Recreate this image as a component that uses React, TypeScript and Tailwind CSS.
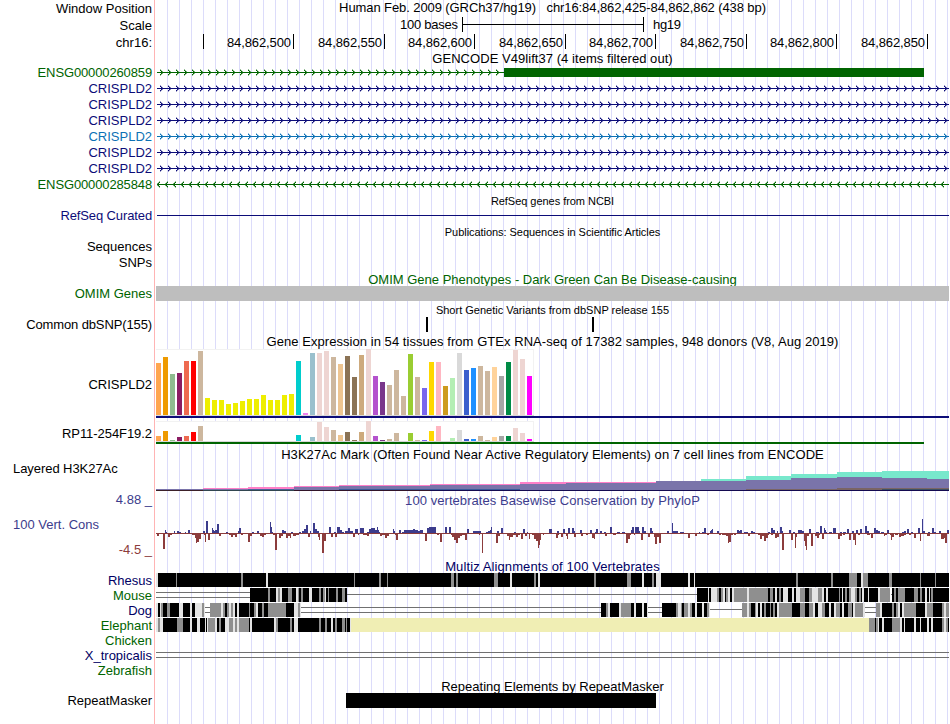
import type { ReactNode } from 'react';

type Bar = [x: number, w: number, h: number];
type Seg = [x: number, w: number, shade: string];

const GREEN = '#006400';
const NAVY = '#0c0c78';
const BLUE = '#0c71b5';

const SHADES: Record<string, string> = { k: '#000000', g: '#8f8f8f', l: '#e4e4e4', w: '#ffffff', y: '#f0eeb4' };

const genes = [
    { name: 'CRISPLD2', color: NAVY, text: 'text-[#0c0c78]' },
    { name: 'CRISPLD2', color: NAVY, text: 'text-[#0c0c78]' },
    { name: 'CRISPLD2', color: NAVY, text: 'text-[#0c0c78]' },
    { name: 'CRISPLD2', color: BLUE, text: 'text-[#0c71b5]' },
    { name: 'CRISPLD2', color: NAVY, text: 'text-[#0c0c78]' },
    { name: 'CRISPLD2', color: NAVY, text: 'text-[#0c0c78]' },
];

const axisTicks: [number, string][] = [
    [203, ''], [293, '84,862,500'], [384, '84,862,550'], [474, '84,862,600'], [565, '84,862,650'],
    [655, '84,862,700'], [746, '84,862,750'], [836, '84,862,800'], [927, '84,862,850'],
];

const tissueColors = [
    '#ffa54f', '#ee9a00', '#8fbc8f', '#8b1c62', '#ee6a50', '#ff0000', '#cdb79e',
    '#eeee00', '#eeee00', '#eeee00', '#eeee00', '#eeee00', '#eeee00', '#eeee00', '#eeee00', '#eeee00', '#eeee00', '#eeee00', '#eeee00', '#eeee00',
    '#00cdcd', '#ee82ee', '#9ac0cd', '#eed5d2', '#eed5d2', '#cdb79e', '#eec591', '#8b7355', '#8b7355', '#cdaa7d', '#eed5d2',
    '#b452cd', '#7a378b', '#cdb79e', '#cdb79e', '#cdb79e', '#9acd32', '#cdb79e', '#7a67ee', '#ffd700', '#ffb6c1',
    '#cd9b1d', '#b4eeb4', '#d9d9d9', '#3a5fcd', '#1e90ff', '#cdb79e', '#cdb79e', '#ffd39b', '#a6a6a6', '#008b45', '#eed5d2', '#eed5d2', '#ff00ff',
];

const crispld2 = [
    52, 58, 41, 42, 54, 54, 64, 17, 15, 15, 11, 12, 14, 16, 16, 20, 15, 15, 20, 21, 54, 2, 62, 62, 64, 58, 51, 59, 38, 60, 66,
    39, 33, 30, 45, 19, 61, 38, 27, 53, 53, 29, 37, 62, 45, 47, 49, 44, 48, 39, 53, 65, 56, 39,
];

const rp11 = [
    5, 10, 1, 4, 5, 9, 15, 0, 0, 0, 0, 0, 0, 0, 0, 0, 0, 0, 0, 0, 6, 0, 4, 19, 14, 11, 6, 9, 1, 9, 20,
    5, 1, 2, 8, 0, 8, 1, 1, 10, 15, 0, 3, 11, 2, 2, 5, 1, 4, 5, 5, 13, 8, 2,
];

// x, width, y of the top edge, fill
const h3k27ac: [number, number, number, string][] = [
    [203, 91, 488, '#ff80c8'], [248, 46, 487, '#ff80c8'], [294, 45, 486, '#ff80c8'], [339, 91, 485, '#ff80c8'],
    [430, 90, 484, '#ff80c8'], [520, 136, 482, '#ff80c8'],
    [701, 45, 479, '#78e8cc'], [746, 45, 476, '#78e8cc'], [791, 46, 474, '#78e8cc'], [837, 45, 472, '#78e8cc'], [882, 67, 471, '#78e8cc'],
    [156, 138, 489, '#7a74aa'], [294, 45, 487, '#7a74aa'], [339, 91, 486, '#7a74aa'], [430, 90, 485, '#7a74aa'],
    [520, 46, 484, '#7a74aa'], [566, 90, 483, '#7a74aa'], [656, 90, 481, '#7a74aa'], [746, 45, 480, '#7a74aa'],
    [791, 46, 478, '#7a74aa'], [837, 45, 477, '#7a74aa'], [882, 45, 478, '#7a74aa'], [927, 22, 479, '#7a74aa'],
    [248, 46, 489, '#46649a'], [339, 181, 489, '#3c5a9a'], [746, 91, 489, '#7a6464'], [837, 112, 488, '#7a6464'], [882, 67, 489, '#3c5064'],
    [156, 47, 490, '#3c2028'], [203, 91, 490, '#324650'], [294, 136, 490, '#321428'], [430, 519, 490, '#140a50'],
];

const conserved: Bar[] = [
    [165, 1, 3], [166, 1, 1], [174, 1, 2], [177, 2, 2], [179, 2, 1], [185, 1, 1], [188, 2, 3], [203, 2, 2], [206, 2, 12], [212, 1, 5], [213, 1, 3], [214, 1, 2], [215, 2, 3], [217, 2, 9], [226, 2, 1],
    [238, 1, 2], [239, 2, 5], [252, 2, 1], [257, 2, 2], [270, 1, 11], [271, 1, 6], [272, 1, 1], [282, 2, 3], [284, 2, 2], [291, 2, 1], [299, 2, 1], [302, 2, 2], [304, 2, 4], [306, 2, 8],
    [310, 1, 2], [313, 2, 10], [315, 2, 4], [317, 2, 2], [329, 2, 6], [334, 2, 1], [337, 3, 6], [340, 2, 3], [342, 2, 1], [345, 3, 2], [348, 2, 5], [350, 3, 2], [355, 3, 4], [360, 4, 5],
    [367, 2, 1], [369, 2, 4], [371, 4, 5], [375, 2, 3], [377, 1, 6], [378, 1, 3], [379, 1, 1], [393, 1, 4], [394, 1, 2], [399, 2, 3], [402, 2, 1], [404, 9, 3], [413, 2, 4], [415, 3, 3], [418, 2, 2],
    [420, 3, 3], [427, 2, 5], [429, 4, 6], [433, 3, 6], [445, 2, 6], [449, 2, 6], [467, 2, 4], [473, 8, 2], [486, 2, 1], [488, 2, 2], [490, 1, 3], [491, 1, 6], [497, 2, 2], [501, 2, 5], [514, 2, 1],
    [523, 2, 4], [527, 1, 1], [549, 3, 4], [557, 2, 2], [563, 2, 4], [568, 2, 5], [572, 2, 5], [574, 1, 2], [580, 2, 3], [590, 2, 3], [595, 1, 1], [596, 2, 4], [600, 2, 2], [604, 2, 1], [610, 2, 6],
    [617, 3, 1], [622, 3, 1], [631, 1, 3], [632, 2, 6], [635, 4, 6], [639, 1, 2], [642, 2, 6], [644, 2, 2], [650, 2, 5], [652, 1, 2], [667, 2, 2], [672, 1, 10], [673, 1, 2], [674, 4, 2], [680, 4, 1],
    [699, 1, 1], [702, 2, 1], [704, 2, 5], [710, 1, 2], [711, 1, 3], [712, 1, 4], [717, 2, 2], [737, 2, 3], [739, 1, 2], [740, 2, 3], [744, 4, 1], [751, 2, 2], [753, 2, 1], [768, 2, 1], [771, 2, 5],
    [773, 2, 3], [777, 1, 2], [780, 2, 6], [782, 1, 2], [789, 2, 3], [793, 2, 1], [798, 4, 3], [802, 2, 2], [809, 2, 4], [816, 3, 1], [820, 2, 7], [824, 1, 5], [825, 1, 3], [826, 1, 1], [829, 3, 1],
    [833, 3, 5], [840, 2, 1], [843, 3, 1], [847, 2, 4], [852, 2, 2], [856, 2, 3], [860, 2, 4], [865, 2, 7], [867, 2, 2], [874, 2, 5], [876, 2, 3], [878, 2, 2], [881, 3, 1], [887, 2, 3], [902, 2, 1],
    [904, 2, 2], [907, 2, 4], [911, 2, 1], [918, 2, 5], [922, 1, 14], [923, 2, 2], [928, 2, 1], [932, 2, 5], [934, 2, 1], [939, 2, 2], [947, 2, 3],
];

const accelerated: Bar[] = [
    [157, 2, 3], [159, 4, 1], [163, 2, 16], [165, 3, 1], [168, 2, 4], [170, 2, 2], [172, 2, 1], [175, 1, 1], [182, 2, 1], [192, 3, 2], [195, 1, 5], [196, 1, 10], [197, 2, 9], [199, 2, 6], [201, 1, 1],
    [204, 1, 2], [205, 1, 9], [208, 2, 7], [210, 2, 1], [219, 2, 3], [221, 4, 1], [229, 2, 2], [231, 2, 4], [233, 2, 2], [235, 2, 4], [241, 2, 2], [243, 5, 1], [248, 2, 9], [250, 2, 3], [254, 5, 1],
    [260, 2, 3], [262, 2, 4], [264, 2, 2], [266, 3, 1], [273, 2, 2], [275, 2, 17], [279, 2, 5], [281, 2, 3], [283, 3, 1], [286, 2, 5], [288, 2, 3], [290, 1, 5], [293, 3, 3], [296, 3, 2], [308, 2, 4],
    [318, 1, 4], [319, 1, 7], [322, 2, 20], [324, 2, 8], [326, 2, 1], [331, 2, 4], [335, 2, 4], [342, 3, 1], [353, 2, 4], [358, 1, 2], [363, 4, 2], [367, 2, 3], [374, 2, 1], [380, 2, 3], [382, 3, 2],
    [385, 2, 5], [387, 2, 3], [389, 3, 1], [395, 1, 2], [396, 2, 7], [400, 2, 1], [423, 2, 1], [425, 2, 8], [437, 2, 2], [440, 2, 9], [442, 2, 1], [451, 1, 2], [452, 2, 4], [454, 2, 7], [456, 2, 10],
    [458, 2, 5], [460, 2, 3], [462, 3, 2], [465, 2, 7], [469, 2, 1], [479, 1, 2], [482, 1, 20], [484, 2, 1], [492, 4, 1], [496, 2, 10], [498, 2, 3], [500, 1, 1], [504, 2, 1], [507, 2, 3], [509, 1, 7],
    [510, 1, 4], [511, 2, 4], [513, 3, 2], [516, 2, 4], [518, 2, 2], [521, 2, 6], [525, 2, 3], [528, 1, 1], [529, 1, 6], [532, 2, 2], [534, 2, 6], [536, 2, 8], [538, 1, 15], [539, 1, 12], [540, 1, 7],
    [543, 1, 2], [548, 3, 1], [552, 2, 1], [556, 2, 5], [558, 1, 2], [561, 2, 4], [566, 1, 3], [567, 1, 6], [574, 2, 4], [576, 1, 1], [581, 2, 3], [584, 2, 1], [586, 2, 2], [592, 2, 5], [594, 1, 6],
    [605, 2, 3], [613, 3, 2], [623, 3, 1], [626, 2, 10], [628, 2, 6], [630, 1, 2], [634, 1, 2], [641, 2, 7], [645, 2, 1], [648, 2, 4], [654, 1, 4], [655, 2, 11], [657, 2, 4], [659, 2, 10], [661, 2, 1],
    [676, 2, 1], [683, 2, 1], [688, 2, 5], [695, 2, 3], [707, 2, 2], [715, 1, 1], [719, 2, 2], [722, 4, 2], [726, 2, 3], [728, 1, 10], [729, 2, 9], [731, 2, 2], [734, 2, 2], [748, 2, 3], [756, 2, 1],
    [758, 2, 2], [760, 2, 6], [762, 2, 3], [764, 2, 8], [766, 2, 5], [768, 1, 2], [771, 2, 2], [775, 2, 5], [777, 2, 4], [782, 2, 17], [787, 1, 1], [791, 2, 7], [795, 1, 15], [796, 1, 4], [804, 1, 8],
    [805, 1, 13], [806, 1, 17], [807, 2, 3], [811, 2, 13], [813, 2, 1], [815, 2, 3], [817, 2, 5], [819, 1, 2], [822, 2, 6], [828, 2, 1], [835, 2, 1], [838, 2, 6], [840, 2, 3], [843, 2, 2], [849, 2, 7],
    [853, 2, 7], [855, 1, 12], [858, 2, 2], [862, 2, 1], [867, 3, 2], [871, 2, 5], [880, 2, 1], [884, 1, 3], [885, 2, 2], [890, 1, 2], [891, 1, 7], [892, 2, 4], [895, 3, 2], [899, 2, 4], [901, 3, 3],
    [904, 2, 2], [909, 2, 2], [914, 2, 5], [920, 1, 8], [927, 3, 3], [941, 3, 6], [944, 1, 5], [945, 2, 10],
];

const rhesus: Seg[] = [
    [156, 2, 'l'], [158, 791, 'k'], [176, 1, 'g'], [241, 2, 'g'], [266, 2, 'l'], [354, 1, 'g'], [379, 2, 'g'], [387, 1, 'g'], [451, 3, 'g'], [456, 2, 'g'], [494, 4, 'g'], [510, 2, 'l'],
    [534, 2, 'g'], [538, 2, 'l'], [594, 2, 'g'], [627, 4, 'g'], [642, 2, 'l'], [652, 2, 'g'], [656, 5, 'l'], [688, 2, 'l'], [694, 1, 'l'], [796, 2, 'g'], [831, 2, 'g'], [849, 8, 'g'],
    [861, 2, 'l'], [863, 5, 'g'], [889, 3, 'g'], [920, 1, 'g'], [935, 1, 'g'],
];

const mouse: Seg[] = [
    [250, 97, 'k'], [268, 2, 'g'], [276, 2, 'l'], [278, 2, 'g'], [280, 2, 'l'], [288, 4, 'g'], [296, 2, 'l'], [298, 1, 'g'], [301, 2, 'g'], [309, 3, 'l'], [319, 2, 'g'], [323, 2, 'g'],
    [325, 1, 'l'], [328, 1, 'g'], [336, 2, 'g'], [342, 3, 'g'], [697, 252, 'k'], [708, 1, 'l'], [711, 6, 'l'], [717, 2, 'g'], [721, 2, 'g'], [723, 2, 'l'], [726, 2, 'g'], [728, 2, 'l'],
    [732, 2, 'l'], [734, 34, 'g'], [747, 2, 'l'], [770, 3, 'g'], [775, 2, 'l'], [779, 2, 'g'], [783, 5, 'l'], [792, 2, 'l'], [796, 4, 'l'], [800, 5, 'g'], [809, 3, 'g'], [812, 2, 'l'],
    [814, 4, 'l'], [818, 4, 'g'], [822, 2, 'l'], [826, 2, 'l'], [839, 1, 'g'], [842, 1, 'l'], [845, 2, 'g'], [849, 2, 'g'], [851, 4, 'l'], [855, 2, 'g'], [859, 2, 'g'], [862, 2, 'l'],
    [868, 1, 'l'], [878, 2, 'l'], [880, 10, 'g'], [890, 2, 'w'], [894, 4, 'g'], [898, 7, 'g'], [896, 2, 'k'], [914, 4, 'g'], [920, 2, 'g'], [925, 2, 'l'], [929, 1, 'l'], [931, 2, 'g'],
];

const dog: Seg[] = [
    [156, 49, 'k'], [156, 2, 'l'], [160, 1, 'l'], [161, 2, 'g'], [167, 3, 'g'], [179, 4, 'l'], [190, 2, 'l'], [195, 7, 'l'], [202, 2, 'g'], [204, 1, 'l'],
    [210, 90, 'k'], [210, 11, 'g'], [221, 2, 'l'], [223, 2, 'g'], [227, 2, 'g'], [229, 2, 'l'], [231, 2, 'g'], [233, 2, 'l'], [237, 2, 'l'], [249, 1, 'g'], [254, 2, 'g'], [256, 2, 'l'],
    [262, 2, 'g'], [268, 18, 'g'], [294, 4, 'l'], [298, 2, 'g'], [300, 1, 'l'],
    [601, 46, 'k'], [606, 2, 'g'], [608, 2, 'l'], [619, 2, 'l'], [621, 10, 'g'], [634, 2, 'l'], [642, 2, 'l'], [647, 1, 'l'],
    [662, 48, 'k'], [676, 2, 'g'], [678, 3, 'l'], [681, 1, 'g'], [684, 4, 'g'], [688, 2, 'l'], [690, 2, 'g'], [695, 2, 'l'], [702, 2, 'l'], [707, 2, 'g'], [709, 1, 'l'],
    [742, 122, 'k'], [742, 5, 'g'], [747, 2, 'l'], [749, 2, 'g'], [755, 1, 'g'], [756, 2, 'l'], [760, 2, 'l'], [764, 2, 'g'], [770, 1, 'g'], [773, 2, 'g'], [777, 2, 'l'], [779, 9, 'g'],
    [788, 4, 'g'], [800, 5, 'g'], [809, 4, 'g'], [813, 2, 'l'], [818, 4, 'l'], [822, 3, 'g'], [829, 2, 'l'], [834, 2, 'l'], [836, 4, 'g'], [842, 2, 'l'], [848, 4, 'g'], [853, 2, 'l'],
    [855, 8, 'g'], [863, 2, 'l'],
    [876, 73, 'k'], [876, 4, 'g'], [880, 2, 'l'], [892, 2, 'g'], [896, 2, 'g'], [898, 2, 'l'], [904, 12, 'g'], [902, 2, 'l'], [925, 2, 'l'], [927, 6, 'g'], [942, 2, 'g'], [944, 2, 'l'], [946, 3, 'g'],
];

const elephant: Seg[] = [
    [156, 194, 'k'], [156, 2, 'l'], [158, 2, 'g'], [160, 3, 'l'], [177, 6, 'g'], [190, 2, 'l'], [197, 3, 'l'], [205, 1, 'l'], [207, 1, 'l'], [208, 7, 'g'], [215, 2, 'l'], [219, 2, 'g'],
    [225, 4, 'l'], [229, 4, 'g'], [233, 2, 'l'], [235, 2, 'g'], [237, 2, 'l'], [239, 10, 'g'], [250, 2, 'l'], [274, 2, 'l'], [276, 2, 'g'], [290, 2, 'g'], [294, 4, 'l'], [319, 2, 'g'],
    [325, 2, 'g'], [331, 2, 'l'], [335, 2, 'g'], [342, 3, 'g'], [346, 1, 'g'], [350, 1, 'l'], [351, 518, 'y'],
    [869, 80, 'k'], [869, 6, 'g'], [876, 2, 'g'], [878, 1, 'l'], [882, 2, 'l'], [892, 8, 'g'], [900, 2, 'l'], [904, 1, 'l'], [914, 2, 'l'], [920, 1, 'l'], [927, 2, 'l'], [931, 2, 'l'],
    [942, 2, 'g'], [944, 2, 'l'], [946, 2, 'g'],
];

type RowProps = { height: string; label?: ReactNode; children?: ReactNode };

// A label cell on the left, the pink divider, then the lane itself.
function Row({ height, label, children }: RowProps) {
    return (
        <div className={`flex ${height}`}>
            <div className="flex w-[155px] shrink-0 flex-col items-end justify-start border-r border-[#ffb4b4] pr-[2px]">{label}</div>
            {children}
        </div>
    );
}

function Label({ children, className = '' }: { children: ReactNode; className?: string }) {
    return <span className={`whitespace-pre leading-[16px] ${className}`}>{children}</span>;
}

function Title({ children, className = '' }: { children: ReactNode; className?: string }) {
    return <div className={`flex w-[795px] justify-center whitespace-pre leading-[16px] ${className}`}>{children}</div>;
}

// Lanes share the chart's own coordinates, so every lane starts at its top.
function Lane({ top, height, children }: { top: number; height: number; children?: ReactNode }) {
    return (
        <svg className="block shrink-0" width={795} height={height} viewBox={`155 ${top} 795 ${height}`} shapeRendering="crispEdges">
            {children}
        </svg>
    );
}

function Gene({ top, color, left = false, end = 949 }: { top: number; color: string; left?: boolean; end?: number }) {
    const y = top + 7;
    const d = left ? 1 : -1;
    const tips: number[] = [];
    for (let x = left ? 157 : 162; x < end; x += 8) tips.push(x);
    return (
        <>
            <rect x={157} y={y} width={end - 157} height={1} fill={color} />
            {tips.map((x) => (
                <g key={x} fill={color}>
                    <rect x={x} y={y - 1} width={1} height={3} opacity={0.5} />
                    <rect x={x + d} y={y - 1} width={1} height={3} />
                    <rect x={x + d} y={y - 2} width={1} height={5} opacity={0.4} />
                    <rect x={x + 2 * d} y={y - 2} width={1} height={1} />
                    <rect x={x + 2 * d} y={y + 2} width={1} height={1} />
                    <rect x={x + 2 * d} y={y - 3} width={1} height={1} opacity={0.4} />
                    <rect x={x + 2 * d} y={y + 3} width={1} height={1} opacity={0.4} />
                </g>
            ))}
        </>
    );
}

function Expression({ values, base, boxTop }: { values: number[]; base: number; boxTop: number }) {
    return (
        <>
            <rect x={156} y={boxTop} width={378} height={base - boxTop + 1} fill="#f2f2f2" />
            <rect x={156} y={boxTop + 1} width={377} height={base - boxTop - 1} fill="#ffffff" />
            <rect x={156} y={base} width={378} height={1} fill="#d8d8d8" />
            {values.map((v, i) => (
                <rect key={i} x={156 + i * 7} y={base - v} width={5} height={v} fill={tissueColors[i]} />
            ))}
        </>
    );
}

function Segments({ data, y }: { data: Seg[]; y: number }) {
    return (
        <>
            {data.map(([x, w, s], i) => (
                <rect key={i} x={x} y={y} width={w} height={14} fill={SHADES[s]} />
            ))}
        </>
    );
}

function DoubleLine({ x, to, y }: { x: number; to: number; y: number }) {
    return (
        <>
            <rect x={x} y={y} width={to - x} height={1} fill="#707070" />
            <rect x={x} y={y + 5} width={to - x} height={1} fill="#707070" />
        </>
    );
}

export default function App() {
    return (
        <div className="relative h-[724px] w-[950px] overflow-hidden bg-white font-['Liberation_Sans',Arial,sans-serif] text-[13px] text-black">
            <div className="absolute inset-y-0 left-[167px] w-[782px] bg-[repeating-linear-gradient(90deg,#dcdcfa_0_1px,transparent_1px_12px)]" />
            <div className="relative flex flex-col">
                <Row height="h-[17px]" label={<Label className="mt-px">Window Position</Label>}>
                    <Title className="tracking-[-0.09px]">{'Human Feb. 2009 (GRCh37/hg19)   chr16:84,862,425-84,862,862 (438 bp)'}</Title>
                </Row>
                <Row height="h-[17px]" label={<Label className="mt-px">Scale</Label>}>
                    <Lane top={17} height={17}>
                        <text x={400} y={29} textLength={58}>100 bases</text>
                        <rect x={462} y={17} width={1} height={15} />
                        <rect x={462} y={24} width={182} height={1} />
                        <rect x={643} y={17} width={1} height={15} />
                        <text x={653} y={29} textLength={28}>hg19</text>
                    </Lane>
                </Row>
                <Row height="h-[17px]" label={<Label className="mt-px">chr16:</Label>}>
                    <Lane top={34} height={17}>
                        {axisTicks.map(([x, text]) => (
                            <g key={x}>
                                <rect x={x} y={34} width={1} height={15} />
                                {text && <text x={x - 66} y={47} textLength={64}>{text}</text>}
                            </g>
                        ))}
                    </Lane>
                </Row>

                <Row height="h-[14px]">
                    <Title className="tracking-[0.05px]">GENCODE V49lift37 (4 items filtered out)</Title>
                </Row>
                <Row height="h-[16px]" label={<Label className="tracking-[-0.13px] text-[#006400]">ENSG00000260859</Label>}>
                    <Lane top={65} height={16}>
                        <Gene top={65} color={GREEN} end={504} />
                        <rect x={504} y={68} width={420} height={9} fill={GREEN} />
                    </Lane>
                </Row>
                {genes.map((g, i) => (
                    <Row key={i} height="h-[16px]" label={<Label className={g.text}>{g.name}</Label>}>
                        <Lane top={0} height={16}>
                            <Gene top={0} color={g.color} />
                        </Lane>
                    </Row>
                ))}
                <Row height="h-[16px]" label={<Label className="tracking-[-0.13px] text-[#006400]">ENSG00000285848</Label>}>
                    <Lane top={0} height={16}>
                        <Gene top={0} color={GREEN} left />
                    </Lane>
                </Row>

                <Row height="h-[15px]">
                    <Title className="text-[11px] tracking-[-0.04px]">RefSeq genes from NCBI</Title>
                </Row>
                <Row height="h-[16px]" label={<Label className="tracking-[-0.12px] text-[#0c0c78]">RefSeq Curated</Label>}>
                    <Lane top={208} height={16}>
                        <rect x={157} y={215} width={792} height={1} fill={NAVY} />
                    </Lane>
                </Row>

                <Row height="h-[15px]">
                    <Title className="text-[11px] tracking-[-0.05px]">Publications: Sequences in Scientific Articles</Title>
                </Row>
                <Row height="h-[16px]" label={<Label>Sequences</Label>} />
                <Row height="h-[16px]" label={<Label>SNPs</Label>} />

                <Row height="h-[15px]">
                    <Title className="pt-px text-[#006400]">OMIM Gene Phenotypes - Dark Green Can Be Disease-causing</Title>
                </Row>
                <Row height="h-[16px]" label={<Label className="text-[#006400]">OMIM Genes</Label>}>
                    <Lane top={286} height={16}>
                        <rect x={156} y={286} width={793} height={15} fill="#bebebe" />
                    </Lane>
                </Row>

                <Row height="h-[15px]">
                    <Title className="text-[11px]">Short Genetic Variants from dbSNP release 155</Title>
                </Row>
                <Row height="h-[16px]" label={<Label className="tracking-[-0.12px]">Common dbSNP(155)</Label>}>
                    <Lane top={317} height={16}>
                        <rect x={426} y={317} width={2} height={15} />
                        <rect x={592} y={317} width={2} height={15} />
                    </Lane>
                </Row>

                <Row height="h-[15px]">
                    <Title className="pt-px tracking-[0.05px]">Gene Expression in 54 tissues from GTEx RNA-seq of 17382 samples, 948 donors (V8, Aug 2019)</Title>
                </Row>
                <Row height="h-[72px]" label={<Label className="mt-[29px]">CRISPLD2</Label>}>
                    <Lane top={348} height={72}>
                        <Expression values={crispld2} base={415} boxTop={349} />
                        <rect x={156} y={416} width={793} height={2} fill={NAVY} />
                    </Lane>
                </Row>
                <Row height="h-[26px]" label={<Label className="mt-1.5 tracking-[-0.06px]">RP11-254F19.2</Label>}>
                    <Lane top={420} height={26}>
                        <Expression values={rp11} base={441} boxTop={421} />
                        <rect x={156} y={442} width={768} height={2} fill={GREEN} />
                    </Lane>
                </Row>

                <Row height="h-[15px]">
                    <Title className="pt-px tracking-[0.06px]">H3K27Ac Mark (Often Found Near Active Regulatory Elements) on 7 cell lines from ENCODE</Title>
                </Row>
                <Row height="h-[31px]" label={<Label className="self-start pl-[13px] tracking-[-0.06px]">Layered H3K27Ac</Label>}>
                    <Lane top={461} height={31}>
                        {h3k27ac.map(([x, w, y, fill], i) => (
                            <rect key={i} x={x} y={y} width={w} height={491 - y} fill={fill} />
                        ))}
                    </Lane>
                </Row>

                <Row height="h-[15px]" label={<Label className="text-[#3c3c8c]">4.88 _</Label>}>
                    <Title className="pt-px tracking-[0.06px] text-[#3c3c8c]">100 vertebrates Basewise Conservation by PhyloP</Title>
                </Row>
                <Row
                    height="h-[52px]"
                    label={
                        <>
                            <Label className="mt-[10px] self-start pl-[13px] text-[#3c3c8c]">100 Vert. Cons</Label>
                            <Label className="mt-[9px] text-[#8c3c3c]">-4.5 _</Label>
                        </>
                    }
                >
                    <Lane top={507} height={52}>
                        <rect x={156} y={533} width={793} height={1} fill="#8c3c3c" />
                        {conserved.map(([x, w, h]) => (
                            <rect key={x} x={x} y={533 - h} width={w} height={h} fill="#3c3c8c" />
                        ))}
                        {accelerated.map(([x, w, h]) => (
                            <rect key={x} x={x} y={533} width={w} height={h} fill="#8c3c3c" />
                        ))}
                    </Lane>
                </Row>

                <Row height="h-[14px]">
                    <Title className="tracking-[0.1px] text-[#000064]">Multiz Alignments of 100 Vertebrates</Title>
                </Row>
                <Row height="h-[15px]" label={<Label className="text-[#000064]">Rhesus</Label>}>
                    <Lane top={573} height={15}>
                        <Segments data={rhesus} y={573} />
                    </Lane>
                </Row>
                <Row height="h-[15px]" label={<Label className="text-[#006400]">Mouse</Label>}>
                    <Lane top={588} height={15}>
                        <DoubleLine x={156} to={250} y={592} />
                        <rect x={347} y={594} width={350} height={1} fill="#707070" />
                        <Segments data={mouse} y={588} />
                        <rect x={891} y={594} width={1} height={1} fill="#707070" />
                    </Lane>
                </Row>
                <Row height="h-[15px]" label={<Label className="text-[#000064]">Dog</Label>}>
                    <Lane top={603} height={15}>
                        <DoubleLine x={205} to={210} y={607} />
                        <DoubleLine x={301} to={601} y={607} />
                        <DoubleLine x={648} to={662} y={607} />
                        <rect x={710} y={609} width={32} height={1} fill="#707070" />
                        <DoubleLine x={865} to={876} y={607} />
                        <Segments data={dog} y={603} />
                    </Lane>
                </Row>
                <Row height="h-[15px]" label={<Label className="text-[#006400]">Elephant</Label>}>
                    <Lane top={618} height={15}>
                        <Segments data={elephant} y={618} />
                    </Lane>
                </Row>
                <Row height="h-[15px]" label={<Label className="text-[#006400]">Chicken</Label>} />
                <Row height="h-[15px]" label={<Label className="text-[#000064]">X_tropicalis</Label>}>
                    <Lane top={648} height={15}>
                        <DoubleLine x={156} to={949} y={652} />
                    </Lane>
                </Row>
                <Row height="h-[15px]" label={<Label className="text-[#006400]">Zebrafish</Label>} />

                <Row height="h-[15px]">
                    <Title className="pt-px">Repeating Elements by RepeatMasker</Title>
                </Row>
                <Row height="h-[31px]" label={<Label>RepeatMasker</Label>}>
                    <Lane top={693} height={31}>
                        <rect x={346} y={693} width={310} height={15} />
                    </Lane>
                </Row>
            </div>
        </div>
    );
}
